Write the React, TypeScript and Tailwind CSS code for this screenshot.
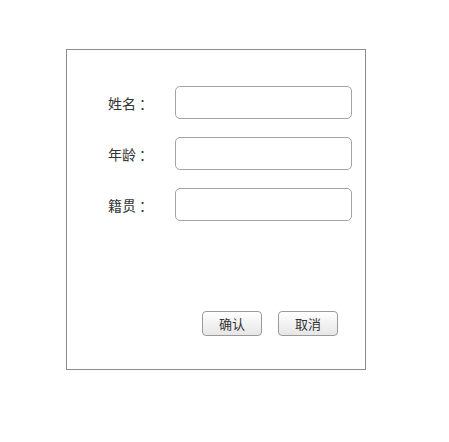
import React from "react";

const fields = ["姓名", "年龄", "籍贯"];

export default function App() {
  return (
    <div
      className="w-[449px] h-[442px] bg-white"
      style={{ fontFamily: "'Noto Sans CJK SC', 'Noto Sans', sans-serif" }}
    >
      <div className="pt-[49px] pl-[66px]">
        <div className="w-[300px] h-[321px] border border-[#8c8c8c] flex flex-col pt-[36px] pl-[41px]">
          <div className="flex flex-col gap-[18px]">
            {fields.map((label) => (
              <div key={label} className="flex items-center">
                <span className="w-[67px] text-[14px] text-[#333] leading-none">
                  {label}
                  <span className="ml-[3px]">：</span>
                </span>
                <input
                  className="w-[177px] h-[33px] border border-[#a3a3a3] rounded-[5px] bg-white outline-none"
                  type="text"
                />
              </div>
            ))}
          </div>
          <div className="flex gap-[16px] mt-[90px] pl-[94px]">
            <button className="w-[60px] h-[25px] border border-[#9a9a9a] rounded-[4px] bg-gradient-to-b from-white to-[#e6e6e6] text-[13px] text-[#333] leading-none">
              确认
            </button>
            <button className="w-[60px] h-[25px] border border-[#9a9a9a] rounded-[4px] bg-gradient-to-b from-white to-[#e6e6e6] text-[13px] text-[#333] leading-none">
              取消
            </button>
          </div>
        </div>
      </div>
    </div>
  );
}
